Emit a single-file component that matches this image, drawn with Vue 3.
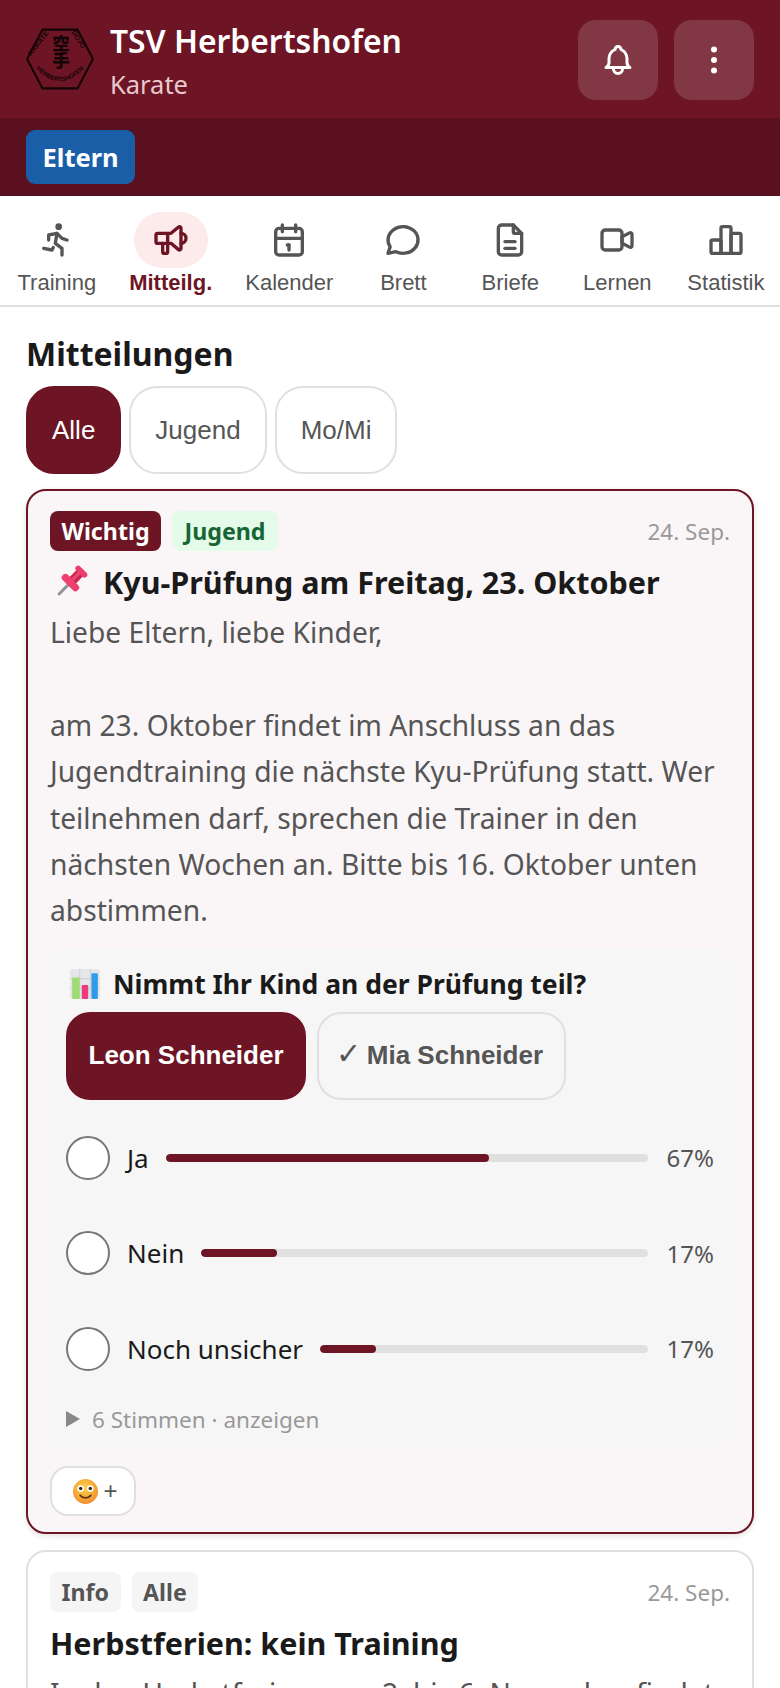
<template>
  <div class="page">
    <header class="topbar">
      <svg class="logo" viewBox="0 0 66 60">
        <defs>
          <path id="arcLeft" d="M5 27 L24 3" />
          <path id="arcRight" d="M44 4 L60 29" />
          <path id="arcBottom" d="M6 35 Q33 68 60 35" />
        </defs>
        <polygon points="16,1.500 50,1.500 65,30 50,58.500 16,58.500 1,30" fill="none" stroke="#140406" stroke-width="2" />
        <text class="logo-ring"><textPath href="#arcLeft">KARATE</textPath></text>
        <text class="logo-ring"><textPath href="#arcRight">DOJO</textPath></text>
        <text class="logo-ring bottom"><textPath href="#arcBottom" startOffset="50%">HERBERTSHOFEN</textPath></text>
        <text class="logo-kanji" x="34" y="21">空</text>
        <text class="logo-kanji" x="34" y="38">手</text>
      </svg>
      <div class="club">
        <div class="club-name">TSV Herbertshofen</div>
        <div class="club-sub">Karate</div>
      </div>
      <button class="top-btn">
        <svg viewBox="0 0 24 24" class="top-icon" fill="none" stroke="#fff" stroke-width="2" stroke-linecap="round" stroke-linejoin="round">
          <path d="M10 5a2 2 0 1 1 4 0a7 7 0 0 1 4 6v3a4 4 0 0 0 2 3h-16a4 4 0 0 0 2 -3v-3a7 7 0 0 1 4 -6" />
          <path d="M9 17v1a3 3 0 0 0 6 0v-1" />
        </svg>
      </button>
      <button class="top-btn">
        <svg viewBox="0 0 24 24" class="top-icon" fill="none" stroke="#fff" stroke-width="2" stroke-linecap="round" stroke-linejoin="round">
          <circle cx="12" cy="5" r="1" /><circle cx="12" cy="12" r="1" /><circle cx="12" cy="19" r="1" />
        </svg>
      </button>
    </header>

    <div class="rolebar"><span class="role">Eltern</span></div>

    <nav class="tabs">
      <div v-for="t in tabs" :key="t.label" class="tab" :class="{ active: t.active }">
        <span class="tab-icon">
          <svg viewBox="0 0 24 24" fill="none" stroke="currentColor" stroke-width="2" stroke-linecap="round" stroke-linejoin="round">
            <path v-for="d in t.paths" :key="d" :d="d" />
          </svg>
        </span>
        <span class="tab-label">{{ t.label }}</span>
      </div>
    </nav>

    <main class="content">
      <h1 class="page-title">Mitteilungen</h1>
      <div class="filters">
        <button v-for="(f, i) in filters" :key="f" class="chip" :class="{ on: i === 0 }">{{ f }}</button>
      </div>

      <article class="card pinned">
        <div class="card-head">
          <span class="tag tag-red">Wichtig</span>
          <span class="tag tag-green">Jugend</span>
          <span class="date">24. Sep.</span>
        </div>
        <h2 class="card-title">
          <svg class="emoji pin" viewBox="0 0 32 32">
            <g transform="rotate(45 16 16)">
              <path d="M16 19v12" stroke="#8f939b" stroke-width="2.600" stroke-linecap="round" />
              <rect x="12" y="3" width="8" height="13" fill="#c9264f" />
              <rect x="14" y="3" width="3" height="13" fill="#ea4673" />
              <rect x="9.500" y="0.500" width="13" height="5" rx="2.500" fill="#ee3d6c" />
              <rect x="6.500" y="13.500" width="19" height="6.500" rx="3" fill="#ef3f6d" />
            </g>
          </svg>
          Kyu-Prüfung am Freitag, 23. Oktober
        </h2>
        <p class="card-text greeting">Liebe Eltern, liebe Kinder,</p>
        <p class="card-text">am 23. Oktober findet im Anschluss an das Jugendtraining die nächste Kyu-Prüfung statt. Wer teilnehmen darf, sprechen die Trainer in den nächsten Wochen an. Bitte bis 16. Oktober unten abstimmen.</p>

        <section class="poll">
          <div class="poll-q">
            <svg class="emoji chart" viewBox="0 0 28 28">
              <rect x="0" y="0" width="28" height="28" rx="3" fill="#e4e6ea" />
              <path d="M0 9h28M0 18h28M9 0v28M19 0v28" stroke="#cfd2d8" stroke-width="1" />
              <rect x="2" y="8" width="7" height="20" rx="1" fill="#9fdc72" />
              <rect x="11" y="15" width="6" height="13" rx="1" fill="#ea3d79" />
              <rect x="20" y="4" width="6" height="24" rx="1" fill="#2f9be8" />
            </svg>
            Nimmt Ihr Kind an der Prüfung teil?
          </div>
          <div class="kids">
            <button class="kid on">Leon Schneider</button>
            <button class="kid"><span class="check">✓</span> Mia Schneider</button>
          </div>
          <div class="options">
            <div v-for="o in options" :key="o.label" class="option">
              <span class="radio"></span>
              <span class="opt-label">{{ o.label }}</span>
              <span class="track"><span class="fill" :style="{ width: o.pct + '%' }"></span></span>
              <span class="pct">{{ o.pct }}%</span>
            </div>
          </div>
          <div class="votes"><span class="tri"></span>6 Stimmen · anzeigen</div>
        </section>

        <button class="react">
          <svg class="emoji face" viewBox="0 0 28 28">
            <defs>
              <radialGradient id="faceFill" cx="45%" cy="35%" r="70%">
                <stop offset="0" stop-color="#fcd34d" />
                <stop offset="1" stop-color="#f08a2c" />
              </radialGradient>
            </defs>
            <circle cx="14" cy="14" r="13" fill="url(#faceFill)" />
            <circle cx="9" cy="11" r="3.400" fill="#fff" /><circle cx="19" cy="11" r="3.400" fill="#fff" />
            <circle cx="9" cy="11" r="1.800" fill="#3b2a20" /><circle cx="19" cy="11" r="1.800" fill="#3b2a20" />
            <path d="M8.500 18c3 3.500 8 3.500 11 0" stroke="#5b3216" stroke-width="1.800" fill="none" stroke-linecap="round" />
          </svg>
          <span class="plus">+</span>
        </button>
      </article>

      <article class="card">
        <div class="card-head">
          <span class="tag tag-grey">Info</span>
          <span class="tag tag-grey">Alle</span>
          <span class="date">24. Sep.</span>
        </div>
        <h2 class="card-title">Herbstferien: kein Training</h2>
        <p class="card-text">In den Herbstferien vom 2. bis 6. November findet kein Training statt.</p>
      </article>
    </main>
  </div>
</template>

<script setup>
const tabs = [
  {
    label: 'Training',
    paths: [
      'M12 4a1 1 0 1 0 2 0a1 1 0 1 0 -2 0',
      'M4 17l5 1l.75 -1.500',
      'M15 21v-4l-4 -3l1 -6',
      'M7 12v-3l5 -1l3 3l3 1'
    ]
  },
  {
    label: 'Mitteilg.',
    active: true,
    paths: [
      'M18 8a3 3 0 0 1 0 6',
      'M10 8v11a1 1 0 0 1 -1 1h-1a1 1 0 0 1 -1 -1v-5',
      'M12 8l4.524 -3.770a.9 .9 0 0 1 1.476 .692v12.156a.9 .9 0 0 1 -1.476 .692l-4.524 -3.770h-8a1 1 0 0 1 -1 -1v-4a1 1 0 0 1 1 -1h8'
    ]
  },
  {
    label: 'Kalender',
    paths: [
      'M4 7a2 2 0 0 1 2 -2h12a2 2 0 0 1 2 2v12a2 2 0 0 1 -2 2h-12a2 2 0 0 1 -2 -2z',
      'M16 3v4',
      'M8 3v4',
      'M4 11h16',
      'M11 15h1',
      'M12 15v3'
    ]
  },
  {
    label: 'Brett',
    paths: [
      'M3 20l1.300 -3.900c-2.324 -3.437 -1.426 -7.872 2.100 -10.374c3.526 -2.501 8.590 -2.296 11.845 .48c3.255 2.777 3.695 7.266 1.029 10.501c-2.666 3.235 -7.615 4.215 -11.574 2.293l-4.700 1'
    ]
  },
  {
    label: 'Briefe',
    paths: [
      'M14 3v4a1 1 0 0 0 1 1h4',
      'M17 21h-10a2 2 0 0 1 -2 -2v-14a2 2 0 0 1 2 -2h7l5 5v11a2 2 0 0 1 -2 2z',
      'M9 13h6',
      'M9 17h6'
    ]
  },
  {
    label: 'Lernen',
    paths: [
      'M15 10l4.553 -2.276a1 1 0 0 1 1.447 .894v6.764a1 1 0 0 1 -1.447 .894l-4.553 -2.276v-4z',
      'M3 8a2 2 0 0 1 2 -2h8a2 2 0 0 1 2 2v8a2 2 0 0 1 -2 2h-8a2 2 0 0 1 -2 -2z'
    ]
  },
  {
    label: 'Statistik',
    paths: [
      'M3 13a1 1 0 0 1 1 -1h4a1 1 0 0 1 1 1v6a1 1 0 0 1 -1 1h-4a1 1 0 0 1 -1 -1z',
      'M15 9a1 1 0 0 1 1 -1h4a1 1 0 0 1 1 1v10a1 1 0 0 1 -1 1h-4a1 1 0 0 1 -1 -1z',
      'M9 5a1 1 0 0 1 1 -1h4a1 1 0 0 1 1 1v14a1 1 0 0 1 -1 1h-4a1 1 0 0 1 -1 -1z'
    ]
  }
]

const filters = ['Alle', 'Jugend', 'Mo/Mi']

const options = [
  { label: 'Ja', pct: 67 },
  { label: 'Nein', pct: 17 },
  { label: 'Noch unsicher', pct: 17 }
]
</script>

<style>
html, body {
  margin: 0;
  background: #fff;
}
</style>

<style scoped>
.page {
  width: 780px;
  height: 1688px;
  overflow: hidden;
  font-family: "Noto Sans", "Open Sans", sans-serif;
  color: #1a1a1a;
  background: #fff;
}

button {
  font-family: "Liberation Sans", Arial, sans-serif;
}

.topbar {
  height: 118px;
  box-sizing: border-box;
  padding: 2px 26px 0;
  display: flex;
  align-items: center;
  background: #6d1524;
}

.logo {
  width: 68px;
  height: 62px;
  margin: -2px 16px 0 0;
  flex: none;
}

.logo-ring {
  font-family: "Liberation Sans", sans-serif;
  font-size: 6.800px;
  font-weight: 700;
  fill: #140406;
}

.logo-ring.bottom {
  font-size: 6px;
  text-anchor: middle;
}

.logo-kanji {
  font-family: "Noto Sans CJK JP", sans-serif;
  font-size: 17px;
  font-weight: 900;
  text-anchor: middle;
  fill: #140406;
}

.club {
  flex: 1;
}

.club-name {
  font-size: 31.800px;
  font-weight: 600;
  line-height: 46px;
  color: #fff;
}

.club-sub {
  margin-top: 2px;
  font-size: 25.500px;
  line-height: 36px;
  color: #e8c9ce;
}

.top-btn {
  width: 80px;
  height: 80px;
  margin-left: 16px;
  border: 0;
  border-radius: 18px;
  background: rgba(255, 255, 255, 0.15);
  display: flex;
  align-items: center;
  justify-content: center;
  padding: 0;
}

.top-icon {
  width: 36px;
  height: 36px;
}

.rolebar {
  height: 78px;
  box-sizing: border-box;
  padding: 12px 26px 0;
  background: #5a101e;
}

.role {
  display: inline-block;
  height: 54px;
  line-height: 55px;
  padding: 0 16.500px;
  border-radius: 9px;
  background: #1a5ea8;
  color: #fff;
  font-size: 25.500px;
  font-weight: 700;
}

.tabs {
  height: 111px;
  box-sizing: border-box;
  border-bottom: 2px solid #e0e0e0;
  display: flex;
  gap: 33px;
  padding: 16px 0 0 17.500px;
  background: #fff;
  font-family: "Liberation Sans", Arial, sans-serif;
}

.tab {
  display: flex;
  flex-direction: column;
  align-items: center;
  color: #555;
}

.tab-icon {
  width: 74px;
  height: 56px;
  border-radius: 28px;
  display: flex;
  align-items: center;
  justify-content: center;
}

.tab-icon svg {
  width: 40px;
  height: 40px;
}

.tab-label {
  font-size: 22px;
  line-height: 28px;
  margin-top: 1px;
  white-space: nowrap;
}

.tab.active {
  color: #6d1524;
}

.tab.active .tab-icon {
  background: #fdeaea;
}

.tab.active .tab-label {
  font-weight: 700;
}

.content {
  padding: 25px 26px 0;
}

.page-title {
  margin: 0 0 10px;
  font-size: 32px;
  line-height: 44px;
  font-weight: 700;
  color: #1a1a1a;
}

.filters {
  display: flex;
  gap: 8px;
  margin-bottom: 15px;
}

.chip {
  height: 88px;
  padding: 1px 24px 0;
  border: 2px solid #e0e0e0;
  border-radius: 28px;
  background: #fff;
  color: #555;
  font-size: 26px;
}

.chip.on {
  background: #6d1524;
  border-color: #6d1524;
  color: #fff;
}

.card {
  box-sizing: border-box;
  border: 2px solid #e0e0e0;
  border-radius: 20px;
  padding: 20px 22px;
  margin-bottom: 16px;
  background: #fff;
}

.card.pinned {
  border-color: #6d1524;
  background: #faf6f7;
  box-shadow: 0 2px 6px rgba(0, 0, 0, 0.12);
  padding-bottom: 16px;
}

.card-head {
  display: flex;
  align-items: center;
  gap: 11px;
  height: 40px;
}

.tag {
  height: 40px;
  line-height: 40px;
  padding: 0 11.500px;
  border-radius: 8px;
  font-size: 23.200px;
  font-weight: 700;
}

.tag-red {
  background: #6d1524;
  color: #fff;
}

.tag-green {
  background: #e3fbe8;
  color: #166534;
  padding: 0 12px 0 12.500px;
}

.tag-grey {
  background: #f5f5f5;
  color: #555;
}

.date {
  margin-left: auto;
  font-size: 22.500px;
  color: #999;
}

.card-title {
  margin: 9px 0 0;
  font-size: 30.500px;
  line-height: 44px;
  font-weight: 700;
  color: #1a1a1a;
  display: flex;
  align-items: center;
}

.emoji {
  flex: none;
}

.pin {
  width: 36px;
  height: 36px;
  margin: 0 14px 0 3px;
}

.card-text {
  margin: 5px 0 0;
  font-size: 28.200px;
  line-height: 46.400px;
  color: #555;
}

.greeting {
  margin-bottom: 46.400px;
}

.greeting + .card-text {
  margin-top: 0;
}

.poll {
  margin-top: 14px;
  padding: 16px 16px 12px;
  border-radius: 16px;
  background: #f6f6f6;
}

.poll-q {
  display: flex;
  align-items: center;
  font-size: 26.500px;
  line-height: 40px;
  font-weight: 700;
  color: #1a1a1a;
}

.chart {
  width: 30px;
  height: 30px;
  margin: 0 13px 0 4px;
}

.kids {
  display: flex;
  gap: 11px;
  margin-top: 8px;
}

.kid {
  height: 88px;
  padding: 0 20.500px;
  border: 2px solid #e0e0e0;
  border-radius: 24px;
  background: #f6f6f6;
  color: #555;
  font-size: 26px;
  font-weight: 700;
}

.check {
  font-size: 30px;
  font-weight: 400;
  line-height: 0;
  margin: 0 -1px 0 -4px;
}

.kid.on {
  background: #6d1524;
  border-color: #6d1524;
  color: #fff;
}

.options {
  margin-top: 10px;
}

.option {
  height: 95.500px;
  display: flex;
  align-items: center;
}

.radio {
  box-sizing: border-box;
  flex: none;
  width: 44px;
  height: 44px;
  border-radius: 50%;
  border: 2px solid #777;
  background: #fff;
  margin-right: 17px;
}

.opt-label {
  font-size: 26px;
  color: #1a1a1a;
  margin-right: 17px;
  white-space: nowrap;
}

.track {
  flex: 1;
  height: 8px;
  border-radius: 4px;
  background: #e0e0e0;
  overflow: hidden;
}

.fill {
  display: block;
  height: 100%;
  border-radius: 4px;
  background: #6d1524;
}

.pct {
  width: 66px;
  text-align: right;
  font-size: 24px;
  color: #555;
}

.votes {
  display: flex;
  align-items: center;
  margin-top: 3px;
  height: 40px;
  font-size: 22.500px;
  color: #999;
}

.tri {
  width: 0;
  height: 0;
  border-left: 14px solid #888;
  border-top: 8px solid transparent;
  border-bottom: 8px solid transparent;
  margin-right: 12px;
}

.react {
  margin-top: 15px;
  width: 86px;
  height: 50px;
  display: flex;
  align-items: center;
  justify-content: center;
  gap: 4px;
  padding: 0 0 0 4px;
  border: 2px solid #e0e0e0;
  border-radius: 18px;
  background: #fff;
}

.face {
  width: 27px;
  height: 27px;
}

.plus {
  font-size: 24px;
  color: #555;
}
</style>
